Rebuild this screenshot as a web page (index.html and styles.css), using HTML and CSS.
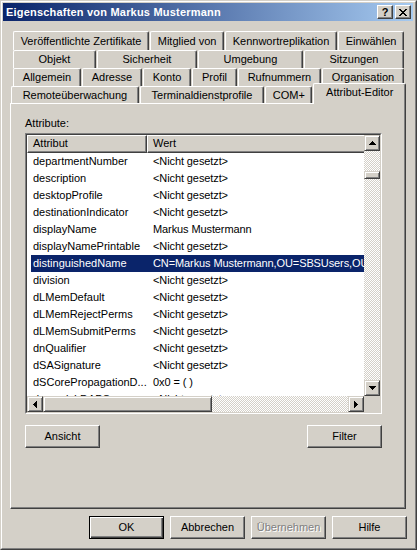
FILE: index.html
```html
<!DOCTYPE html>
<html lang="de">
<head>
<meta charset="utf-8">
<title>Eigenschaften von Markus Mustermann</title>
<link rel="stylesheet" href="styles.css">
</head>
<body>
<div class="window">
  <div class="frame">
    <div class="titlebar">
      <span class="title">Eigenschaften von Markus Mustermann</span>
      <div class="caption-buttons">
        <div class="cbtn help">?</div>
        <div class="cbtn close">
          <svg width="8" height="7" viewBox="0 0 8 7" shape-rendering="crispEdges"><path d="M0 0h2v1h-2zM6 0h2v1h-2zM1 1h2v1h-2zM5 1h2v1h-2zM2 2h4v1h-4zM3 3h2v1h-2zM2 4h4v1h-4zM1 5h2v1h-2zM5 5h2v1h-2zM0 6h2v1h-2zM6 6h2v1h-2z" fill="#000"/></svg>
        </div>
      </div>
    </div>
    <div class="content">
      <div class="tabs">
        <div class="tabrow r1">
          <div class="tab">Veröffentlichte Zertifikate</div>
          <div class="tab">Mitglied von</div>
          <div class="tab">Kennwortreplikation</div>
          <div class="tab">Einwählen</div>
        </div>
        <div class="tabrow r2">
          <div class="tab">Objekt</div>
          <div class="tab">Sicherheit</div>
          <div class="tab">Umgebung</div>
          <div class="tab">Sitzungen</div>
        </div>
        <div class="tabrow r3">
          <div class="tab">Allgemein</div>
          <div class="tab">Adresse</div>
          <div class="tab">Konto</div>
          <div class="tab">Profil</div>
          <div class="tab">Rufnummern</div>
          <div class="tab">Organisation</div>
        </div>
        <div class="tabrow r4">
          <div class="tab">Remoteüberwachung</div>
          <div class="tab">Terminaldienstprofile</div>
          <div class="tab narrow">COM+</div>
          <div class="tab selected">Attribut-Editor</div>
        </div>
      </div>
      <div class="panel">
        <div class="label">Attribute:</div>
        <div class="listbox">
          <div class="lb-inner">
            <div class="lv-main">
              <div class="lv">
                <div class="lv-header">
                  <div class="hcol c1">Attribut</div>
                  <div class="hcol c2">Wert</div>
                </div>
                <div class="lv-rows">
                  <div class="row"><span class="a">departmentNumber</span><span class="v">&lt;Nicht gesetzt&gt;</span></div>
                  <div class="row"><span class="a">description</span><span class="v">&lt;Nicht gesetzt&gt;</span></div>
                  <div class="row"><span class="a">desktopProfile</span><span class="v">&lt;Nicht gesetzt&gt;</span></div>
                  <div class="row"><span class="a">destinationIndicator</span><span class="v">&lt;Nicht gesetzt&gt;</span></div>
                  <div class="row"><span class="a">displayName</span><span class="v">Markus Mustermann</span></div>
                  <div class="row"><span class="a">displayNamePrintable</span><span class="v">&lt;Nicht gesetzt&gt;</span></div>
                  <div class="row selected"><span class="a">distinguishedName</span><span class="v">CN=Markus Mustermann,OU=SBSUsers,OU=Users,OU=MyBusiness,DC=firma,DC=local</span></div>
                  <div class="row"><span class="a">division</span><span class="v">&lt;Nicht gesetzt&gt;</span></div>
                  <div class="row"><span class="a">dLMemDefault</span><span class="v">&lt;Nicht gesetzt&gt;</span></div>
                  <div class="row"><span class="a">dLMemRejectPerms</span><span class="v">&lt;Nicht gesetzt&gt;</span></div>
                  <div class="row"><span class="a">dLMemSubmitPerms</span><span class="v">&lt;Nicht gesetzt&gt;</span></div>
                  <div class="row"><span class="a">dnQualifier</span><span class="v">&lt;Nicht gesetzt&gt;</span></div>
                  <div class="row"><span class="a">dSASignature</span><span class="v">&lt;Nicht gesetzt&gt;</span></div>
                  <div class="row"><span class="a">dSCorePropagationD...</span><span class="v">0x0 = ( )</span></div>
                  <div class="row"><span class="a">dynamicLDAPServer</span><span class="v">&lt;Nicht gesetzt&gt;</span></div>
                </div>
              </div>
              <div class="vscroll">
                <div class="sbtn">
                  <svg width="7" height="4" viewBox="0 0 7 4" shape-rendering="crispEdges"><path d="M3 0h1v1h-1zM2 1h3v1h-3zM1 2h5v1h-5zM0 3h7v1h-7z" fill="#000"/></svg>
                </div>
                <div class="vtrack"><div class="vthumb"></div></div>
                <div class="sbtn">
                  <svg width="7" height="4" viewBox="0 0 7 4" shape-rendering="crispEdges"><path d="M0 0h7v1h-7zM1 1h5v1h-5zM2 2h3v1h-3zM3 3h1v1h-1z" fill="#000"/></svg>
                </div>
              </div>
            </div>
            <div class="hscroll-row">
              <div class="hscroll">
                <div class="sbtn">
                  <svg width="4" height="7" viewBox="0 0 4 7" shape-rendering="crispEdges"><path d="M3 0h1v7h-1zM2 1h1v5h-1zM1 2h1v3h-1zM0 3h1v1h-1z" fill="#000"/></svg>
                </div>
                <div class="hthumb"></div>
                <div class="htrack"></div>
                <div class="sbtn">
                  <svg width="4" height="7" viewBox="0 0 4 7" shape-rendering="crispEdges"><path d="M0 0h1v7h-1zM1 1h1v5h-1zM2 2h1v3h-1zM3 3h1v1h-1z" fill="#000"/></svg>
                </div>
              </div>
              <div class="corner"></div>
            </div>
          </div>
        </div>
        <div class="panel-buttons">
          <button class="btn">Ansicht</button>
          <button class="btn">Filter</button>
        </div>
      </div>
      <div class="dialog-buttons">
        <button class="btn default">OK</button>
        <button class="btn">Abbrechen</button>
        <button class="btn disabled">Übernehmen</button>
        <button class="btn">Hilfe</button>
      </div>
    </div>
  </div>
</div>
</body>
</html>
```
FILE: styles.css
```css
* { box-sizing: border-box; }
html, body { margin: 0; padding: 0; }
body {
  width: 417px;
  height: 550px;
  overflow: hidden;
  background: #d4d0c8;
  font-family: "Liberation Sans", Arial, sans-serif;
  font-size: 11px;
  color: #000;
}
.window {
  width: 417px;
  height: 550px;
  border: 1px solid;
  border-color: #d4d0c8 #404040 #404040 #d4d0c8;
}
.frame {
  height: 100%;
  border: 1px solid;
  border-color: #fff #808080 #808080 #fff;
  padding: 1px 2px 2px 1px;
  display: flex;
  flex-direction: column;
}
.titlebar {
  height: 18px;
  flex-shrink: 0;
  background: linear-gradient(to right, #0a246a, #a6caf0);
  display: flex;
  align-items: center;
  justify-content: space-between;
  padding: 0 2px 0 3px;
}
.title {
  color: #fff;
  font-weight: bold;
  font-size: 11px;
  letter-spacing: 0.2px;
  white-space: nowrap;
}
.caption-buttons { display: flex; gap: 2px; }
.cbtn {
  width: 16px;
  height: 14px;
  background: #d4d0c8;
  border: 1px solid;
  border-color: #fff #404040 #404040 #fff;
  box-shadow: inset -1px -1px #808080;
  display: flex;
  align-items: center;
  justify-content: center;
}
.cbtn.help { font-weight: bold; font-size: 11px; line-height: 12px; }
.content {
  flex: 1;
  padding: 10px 7px 0 7px;
  display: flex;
  flex-direction: column;
}
.tabrow { display: flex; gap: 1px; }
.r1 { height: 19px; margin: 0 2px 0 3px; }
.r2, .r3 { height: 18px; margin: 0 2px 0 3px; }
.r4 { height: 17px; margin: 0 0 0 1px; position: relative; z-index: 1; }
.tab {
  flex: 1 1 auto;
  padding: 0 4px;
  text-align: center;
  white-space: nowrap;
  border-top: 1px solid #fff;
  border-left: 1px solid #fff;
  border-right: 1px solid #404040;
  box-shadow: inset -1px 0 #808080;
  border-radius: 2px 2px 0 0;
  line-height: 16px;
  background: #d4d0c8;
}
.r1 .tab { line-height: 18px; }
.tab.narrow { flex-grow: 0.4; }
.tab.selected {
  margin-top: -3px;
  margin-bottom: -1px;
  padding: 0 5px;
  line-height: 17px;
}
.panel {
  height: 406px;
  flex-shrink: 0;
  border: 1px solid;
  border-color: #fff #404040 #404040 #fff;
  box-shadow: inset -1px -1px #808080;
  padding: 12px 0 0 14px;
}
.label { height: 13px; line-height: 14px; margin-bottom: 4px; }
.listbox {
  width: 357px;
  height: 281px;
  border: 1px solid;
  border-color: #808080 #fff #fff #808080;
}
.lb-inner {
  height: 100%;
  border: 1px solid;
  border-color: #404040 #d4d0c8 #d4d0c8 #404040;
  background: #fff;
  display: flex;
  flex-direction: column;
}
.lv-main { height: 261px; display: flex; }
.lv { width: 337px; overflow: hidden; }
.lv-header { display: flex; height: 18px; }
.hcol {
  flex-shrink: 0;
  height: 18px;
  background: #d4d0c8;
  border: 1px solid;
  border-color: #fff #404040 #404040 #fff;
  box-shadow: inset -1px -1px #808080;
  padding-left: 5px;
  line-height: 15px;
  white-space: nowrap;
}
.hcol.c1 { width: 120px; }
.hcol.c2 { width: 420px; }
.row {
  display: flex;
  height: 17px;
  line-height: 17px;
  margin-left: 4px;
  white-space: nowrap;
}
.row .a { width: 116px; flex-shrink: 0; padding-left: 2px; overflow: hidden; }
.row .v { padding-left: 6px; letter-spacing: -0.1px; }
.row.selected { background: #0a246a; color: #fff; }
.vscroll {
  width: 16px;
  display: flex;
  flex-direction: column;
  background: repeating-conic-gradient(#fff 0 25%, #d4d0c8 0 50%) 0 0 / 2px 2px;
}
.sbtn {
  width: 16px;
  height: 16px;
  flex-shrink: 0;
  background: #d4d0c8;
  border: 1px solid;
  border-color: #d4d0c8 #404040 #404040 #d4d0c8;
  box-shadow: inset 1px 1px #fff, inset -1px -1px #808080;
  display: flex;
  align-items: center;
  justify-content: center;
}
.sbtn svg { display: block; }
.vtrack { flex: 1; padding-top: 20px; }
.vthumb, .hthumb {
  background: #d4d0c8;
  border: 1px solid;
  border-color: #d4d0c8 #404040 #404040 #d4d0c8;
  box-shadow: inset 1px 1px #fff, inset -1px -1px #808080;
}
.vthumb { width: 16px; height: 8px; }
.hscroll-row { height: 16px; display: flex; }
.hscroll {
  width: 337px;
  display: flex;
  background: repeating-conic-gradient(#fff 0 25%, #d4d0c8 0 50%) 0 0 / 2px 2px;
}
.hthumb { width: 169px; height: 16px; flex-shrink: 0; }
.htrack { flex: 1; }
.corner { width: 16px; background: #d4d0c8; }
.panel-buttons {
  width: 357px;
  display: flex;
  justify-content: space-between;
  margin-top: 11px;
}
.btn {
  width: 75px;
  height: 23px;
  padding: 0;
  margin: 0;
  font-family: "Liberation Sans", Arial, sans-serif;
  font-size: 11px;
  color: #000;
  background: #d4d0c8;
  border: 1px solid;
  border-color: #fff #404040 #404040 #fff;
  box-shadow: inset -1px -1px #808080;
  border-radius: 0;
  line-height: 19px;
  text-align: center;
}
.btn.default {
  border-color: #000;
  box-shadow: inset 1px 1px #fff, inset -1px -1px #404040, inset -2px -2px #808080;
}
.btn.disabled { color: #808080; text-shadow: 1px 1px #fff; }
.dialog-buttons {
  display: flex;
  justify-content: flex-end;
  gap: 6px;
  margin-top: 7px;
  margin-right: -1px;
}
```
